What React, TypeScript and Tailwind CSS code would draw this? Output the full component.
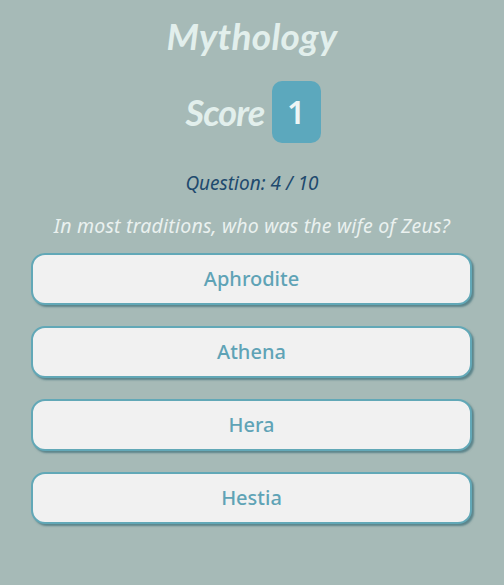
const options = ['Aphrodite', 'Athena', 'Hera', 'Hestia']

export default function App() {
  return (
    <div className="min-h-[585px] w-full bg-[#a6bab7] flex flex-col items-center font-['Noto_Sans',sans-serif]">
      <h1 className="mt-[14px] text-[37px] leading-[44px] font-bold italic text-[#e2efec] font-['Lato',sans-serif] tracking-[0.3px]">
        Mythology
      </h1>
      <div className="mt-[23px] ml-[2px] flex items-center gap-[7px]">
        <span className="text-[36px] font-bold italic text-[#e2efec] font-['Lato',sans-serif] tracking-[-0.8px]">Score</span>
        <span className="w-[49px] h-[62px] rounded-[10px] bg-[#5ca8bd] flex items-center justify-center text-[32px] font-semibold text-[#eef5f5]">
          1
        </span>
      </div>
      <p className="mt-[26px] text-[19px] leading-[28px] italic text-[#1f4a6e]">Question: 4 / 10</p>
      <p className="mt-[15px] text-[19.5px] leading-[28px] italic text-[#eaf1ef] tracking-[0.2px]">In most traditions, who was the wife of Zeus?</p>
      <div className="mt-[13px] ml-[-1px] w-[441px] flex flex-col gap-[21px]">
        {options.map(o => (
          <button
            key={o}
            className="h-[52px] w-full rounded-[14px] border-2 border-[#62a8b7] bg-[#f1f1f1] shadow-[2px_2px_2px_rgba(60,110,120,0.7)] text-[20px] font-medium text-[#5fa3b6]"
          >
            {o}
          </button>
        ))}
      </div>
    </div>
  )
}
